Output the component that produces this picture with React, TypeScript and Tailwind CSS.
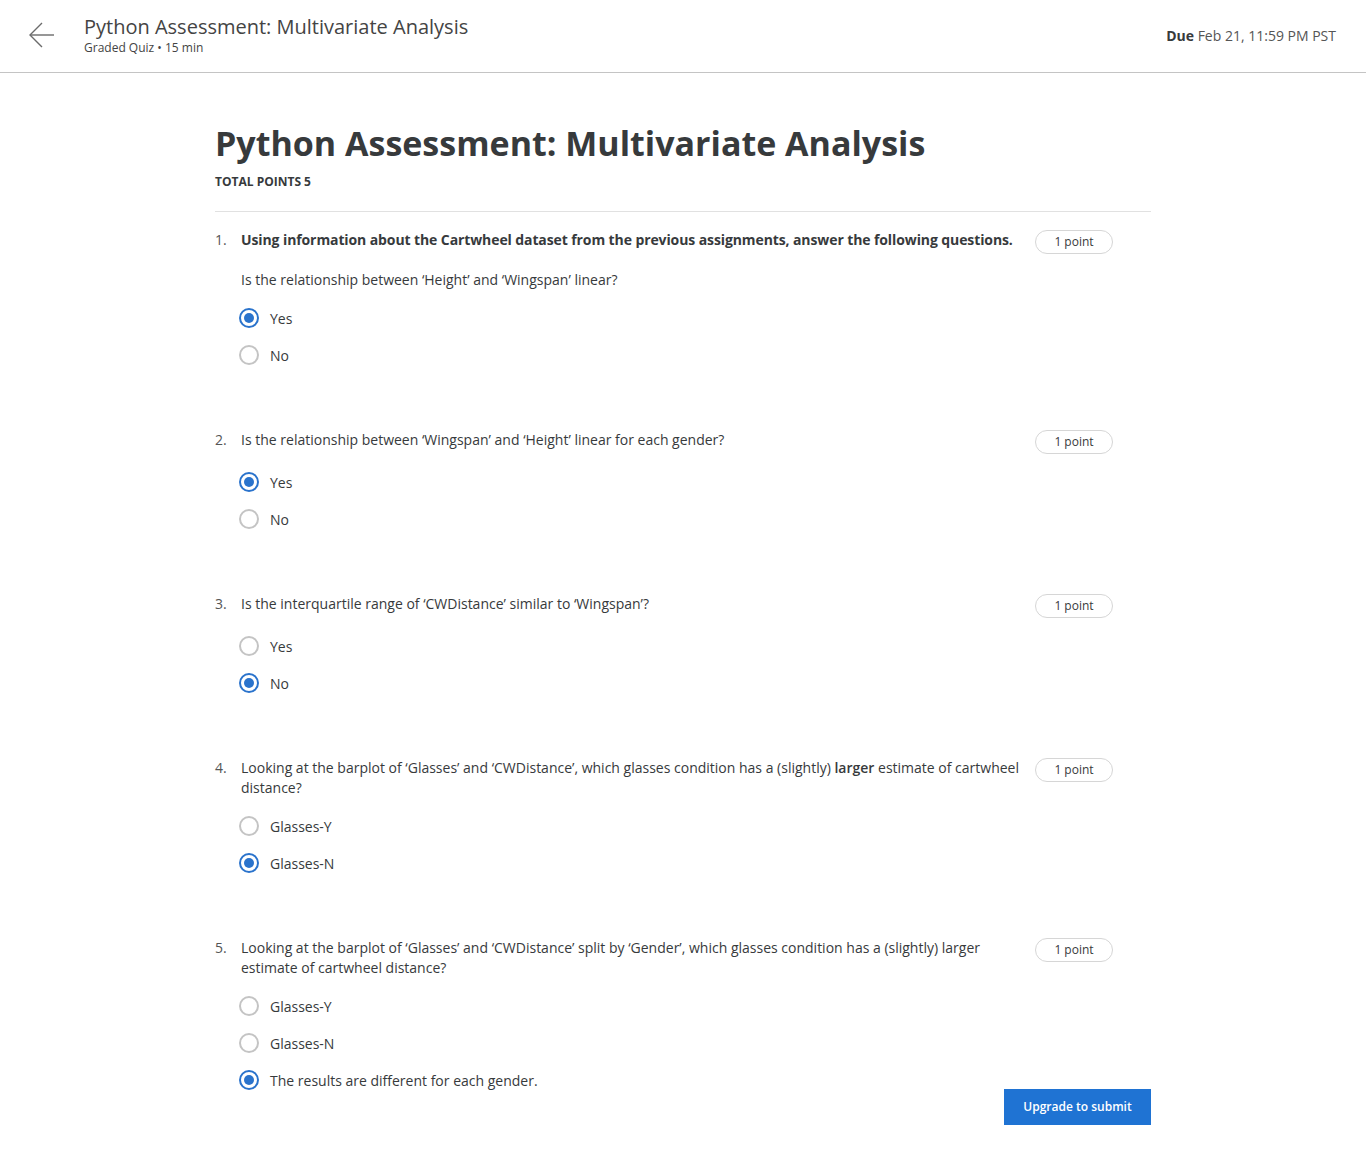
import React from "react";

type Option = { label: string; checked?: boolean };

interface Question {
  title: React.ReactNode;
  bold?: boolean;
  subtitle?: string;
  options: Option[];
}

const questions: Question[] = [
  {
    title:
      "Using information about the Cartwheel dataset from the previous assignments, answer the following questions.",
    bold: true,
    subtitle: "Is the relationship between \u2018Height\u2019 and \u2018Wingspan\u2019 linear?",
    options: [{ label: "Yes", checked: true }, { label: "No" }],
  },
  {
    title:
      "Is the relationship between \u2018Wingspan\u2019 and \u2018Height\u2019 linear for each gender?",
    options: [{ label: "Yes", checked: true }, { label: "No" }],
  },
  {
    title: "Is the interquartile range of \u2018CWDistance\u2019 similar to \u2018Wingspan\u2019?",
    options: [{ label: "Yes" }, { label: "No", checked: true }],
  },
  {
    title: (
      <>
        {"Looking at the barplot of \u2018Glasses\u2019 and \u2018CWDistance\u2019, which glasses condition has a (slightly) "}
        <b className="font-semibold">larger</b>
        {" estimate of cartwheel distance?"}
      </>
    ),
    options: [{ label: "Glasses-Y" }, { label: "Glasses-N", checked: true }],
  },
  {
    title:
      "Looking at the barplot of \u2018Glasses\u2019 and \u2018CWDistance\u2019 split by \u2018Gender\u2019, which glasses condition has a (slightly) larger estimate of cartwheel distance?",
    options: [
      { label: "Glasses-Y" },
      { label: "Glasses-N" },
      { label: "The results are different for each gender.", checked: true },
    ],
  },
];

function Radio({ checked }: { checked?: boolean }) {
  return (
    <span
      className={
        checked
          ? "flex h-5 w-5 items-center justify-center rounded-full border-2 border-[#2a73cc]"
          : "flex h-5 w-5 items-center justify-center rounded-full border-2 border-[#c4c4c4]"
      }
    >
      {checked && <span className="h-[10px] w-[10px] rounded-full bg-[#2a73cc]" />}
    </span>
  );
}

function QuestionBlock({ q, idx }: { q: Question; idx: number }) {
  return (
    <li className="flex flex-col">
      <div className="flex items-start pr-[38px]">
        <span className="w-[26px] shrink-0 text-[14px] leading-5 text-[#555]">{idx + 1}.</span>
        <p
          className={
            q.bold
              ? "flex-1 text-[14px] font-bold leading-5 tracking-[-0.1px] text-[#373a3c]"
              : "flex-1 text-[14px] leading-5 text-[#373a3c]"
          }
        >
          {q.title}
        </p>
        <span className="ml-[10px] flex h-[24px] w-[78px] shrink-0 items-center justify-center rounded-full border border-[#d6d6d6] text-[12px] text-[#373a3c]">
          1 point
        </span>
      </div>
      {q.subtitle && (
        <p className="ml-[26px] mt-[16px] text-[14px] leading-5 text-[#373a3c]">{q.subtitle}</p>
      )}
      <ul className="ml-[24px] mt-[18px] flex flex-col gap-[17px]">
        {q.options.map((o) => (
          <li key={o.label} className="flex h-5 items-center gap-[11px]">
            <Radio checked={o.checked} />
            <span className="text-[14px] text-[#373a3c]">{o.label}</span>
          </li>
        ))}
      </ul>
    </li>
  );
}

export default function App() {
  return (
    <div className="min-h-[1149px] bg-white font-['Open_Sans',sans-serif] text-[#373a3c]">
      <header className="flex h-[73px] items-center justify-between border-b border-[#c4c4c4] pb-[2px] pl-[28px] pr-[30px]">
        <div className="flex items-center gap-[28px]">
          <svg width="28" height="28" viewBox="0 0 28 28" fill="none" stroke="#6b6b6b" strokeWidth="1.4">
            <path d="M26 14H2" />
            <path d="M14 2L2 14l12 12" />
          </svg>
          <div className="flex flex-col pb-[1px]">
            <span className="text-[20px] leading-[26px] text-[#444]">
              Python Assessment: Multivariate Analysis
            </span>
            <span className="text-[12px] leading-4 text-[#444]">{"Graded Quiz \u2022 15 min"}</span>
          </div>
        </div>
        <div className="text-[14px] text-[#555]">
          <b className="font-bold text-[#373a3c]">Due</b> Feb 21, 11:59 PM PST
        </div>
      </header>

      <main className="mx-auto w-[936px] pt-[46px] pb-[24px]">
        <h1 className="text-[34px] font-bold leading-[48px] text-[#373a3c]">
          Python Assessment: Multivariate Analysis
        </h1>
        <div className="mt-[7px] text-[12px] font-bold leading-4 text-[#373a3c]">TOTAL POINTS 5</div>
        <div className="mt-[21px] border-b border-[#e1e1e1]" />

        <ol className="mt-[18px] flex flex-col gap-[65px]">
          {questions.map((q, idx) => (
            <QuestionBlock key={idx} q={q} idx={idx} />
          ))}
        </ol>

        <div className="mt-[-1px] flex justify-end">
          <button className="h-[36px] w-[147px] bg-[#1f73d3] text-[12px] font-semibold text-white">
            Upgrade to submit
          </button>
        </div>
      </main>
    </div>
  );
}
